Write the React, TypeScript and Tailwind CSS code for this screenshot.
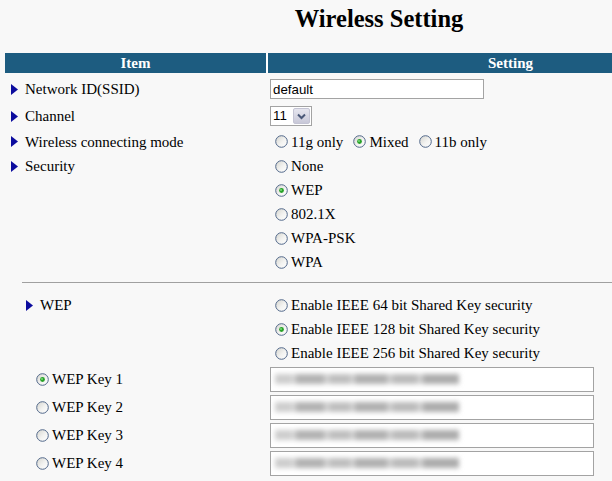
import React from "react";

const SERIF = "font-['Liberation_Serif','Times_New_Roman',serif]";
const SANS = "font-['Liberation_Sans',Arial,sans-serif]";

function Tri() {
  return (
    <svg width="7" height="11" viewBox="0 0 7 11" className="shrink-0">
      <polygon points="0,0 7,5.5 0,11" fill="#0c0c9e" />
    </svg>
  );
}

function Radio({ checked = false }: { checked?: boolean }) {
  return (
    <svg width="13" height="13" viewBox="0 0 13 13" className="shrink-0">
      <defs>
        <linearGradient id="xpRadioGrad" x1="0" y1="0" x2="1" y2="1">
          <stop offset="0" stopColor="#d4d4ce" />
          <stop offset="0.55" stopColor="#f3f3f1" />
          <stop offset="1" stopColor="#ffffff" />
        </linearGradient>
      </defs>
      <circle cx="6.5" cy="6.5" r="5.8" fill="url(#xpRadioGrad)" stroke="#52688a" strokeWidth="1" />
      {checked && <circle cx="6.5" cy="6.5" r="2.4" fill="#27a127" />}
      {checked && <circle cx="6" cy="6" r="1" fill="#79dc79" />}
    </svg>
  );
}

function Label({ children, pl = "pl-[6px]" }: { children: React.ReactNode; pl?: string }) {
  return (
    <div className={`flex items-center gap-[7px] ${pl}`}>
      <Tri />
      <span>{children}</span>
    </div>
  );
}

function Opt({ children, checked = false }: { children: React.ReactNode; checked?: boolean }) {
  return (
    <span className="flex items-center gap-[3px]">
      <Radio checked={checked} />
      <span>{children}</span>
    </span>
  );
}

function Blur() {
  return (
    <div className="flex h-[10px] w-[184px] blur-[2.4px]">
      <div className="w-[16px] bg-[#cdcdcd]" />
      <div className="w-[5px] bg-[#d6d6d6]" />
      <div className="w-[28px] bg-[#b2b2b2]" />
      <div className="w-[6px] bg-[#d0d0d0]" />
      <div className="w-[20px] bg-[#bebebe]" />
      <div className="w-[5px] bg-[#d2d2d2]" />
      <div className="w-[32px] bg-[#b0b0b0]" />
      <div className="w-[6px] bg-[#cecece]" />
      <div className="w-[24px] bg-[#bababa]" />
      <div className="w-[6px] bg-[#d0d0d0]" />
      <div className="w-[36px] bg-[#acacac]" />
    </div>
  );
}

function KeyInput() {
  return (
    <div className="flex h-[25px] w-[324px] items-center overflow-hidden border border-[#a3a3a3] bg-white pl-[4px]">
      <Blur />
    </div>
  );
}

export default function App() {
  return (
    <div className={`min-h-[481px] w-full overflow-hidden bg-[#f8f8f8] text-[15px] leading-[24px] text-black ${SERIF}`}>
      <div className="w-[758px]">
        <div className="h-[53px] pt-[5px] text-center text-[24.5px] font-bold leading-[28px]">Wireless Setting</div>
        <div className="ml-[5px] w-[748px]">
          {/* header */}
          <div className="flex h-[20px] gap-[2px] bg-white text-[15px] font-bold leading-[20px] text-white">
            <div className="w-[261px] bg-[#1d5c80] text-center">Item</div>
            <div className="flex-1 bg-[#1d5c80] text-center">Setting</div>
          </div>

          <div className="mt-[2px]">
            {/* SSID */}
            <div className="flex h-[28px] items-center gap-[2px]">
              <div className="w-[261px]">
                <Label>Network ID(SSID)</Label>
              </div>
              <div className="flex-1 pl-[2px]">
                <input
                  readOnly
                  value="default"
                  className={`block h-[20px] w-[214px] border border-[#a3a3a3] bg-white px-[2px] text-[13.3px] leading-[18px] outline-none ${SANS}`}
                />
              </div>
            </div>

            {/* Channel */}
            <div className="flex h-[26px] items-center gap-[2px]">
              <div className="w-[261px]">
                <Label>Channel</Label>
              </div>
              <div className="flex-1 pl-[2px]">
                <div className={`flex h-[20px] w-[42px] items-center justify-between border border-[#a3a3a3] bg-white pl-[2px] pr-[1px] text-[13.3px] leading-[18px] ${SANS}`}>
                  <span>11</span>
                  <div className="flex h-[16px] w-[17px] items-center justify-center rounded-[2px] border border-[#c4c4d4] bg-[linear-gradient(to_bottom,#e6e6ef,#c8c8d8)]">
                    <svg width="9" height="7" viewBox="0 0 9 7">
                      <polyline points="1,1.5 4.5,5 8,1.5" fill="none" stroke="#4a5878" strokeWidth="2" />
                    </svg>
                  </div>
                </div>
              </div>
            </div>

            {/* Mode */}
            <div className="flex h-[25px] items-center gap-[2px]">
              <div className="w-[261px]">
                <Label>Wireless connecting mode</Label>
              </div>
              <div className="flex flex-1 items-center gap-[10px] pl-[7px]">
                <Opt>11g only</Opt>
                <Opt checked>Mixed</Opt>
                <Opt>11b only</Opt>
              </div>
            </div>

            {/* Security */}
            <div className="flex items-start gap-[2px]">
              <div className="flex h-[24px] w-[261px] items-center">
                <Label>Security</Label>
              </div>
              <div className="flex flex-1 flex-col pl-[7px]">
                <div className="flex h-[24px] items-center"><Opt>None</Opt></div>
                <div className="flex h-[24px] items-center"><Opt checked>WEP</Opt></div>
                <div className="flex h-[24px] items-center"><Opt>802.1X</Opt></div>
                <div className="flex h-[24px] items-center"><Opt>WPA-PSK</Opt></div>
                <div className="flex h-[24px] items-center"><Opt>WPA</Opt></div>
              </div>
            </div>

            {/* divider */}
            <div className="h-[19px] pl-[17px] pt-[8px]">
              <div className="border-t border-[#a0a0a0]" />
            </div>

            {/* WEP */}
            <div className="flex items-start gap-[2px]">
              <div className="flex h-[24px] w-[261px] items-center">
                <Label pl="pl-[21px]">WEP</Label>
              </div>
              <div className="flex flex-1 flex-col pl-[7px]">
                <div className="flex h-[24px] items-center"><Opt>Enable IEEE 64 bit Shared Key security</Opt></div>
                <div className="flex h-[24px] items-center"><Opt checked>Enable IEEE 128 bit Shared Key security</Opt></div>
                <div className="flex h-[24px] items-center"><Opt>Enable IEEE 256 bit Shared Key security</Opt></div>
              </div>
            </div>

            {/* Keys */}
            {[1, 2, 3, 4].map((n) => (
              <div key={n} className="flex h-[28px] items-center gap-[2px]">
                <div className="w-[261px] pl-[31px]">
                  <Opt checked={n === 1}>WEP Key {n}</Opt>
                </div>
                <div className="flex-1 pl-[2px]">
                  <KeyInput />
                </div>
              </div>
            ))}
          </div>
        </div>
      </div>
    </div>
  );
}
